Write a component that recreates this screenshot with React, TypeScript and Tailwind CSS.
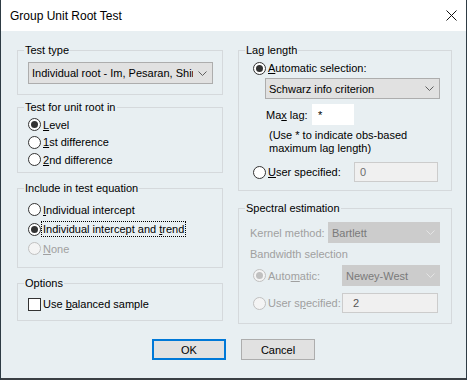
import React from "react";

const Chevron: React.FC<{ disabled?: boolean }> = ({ disabled }) => (
	<svg width="9" height="5" viewBox="0 0 9 5" className="shrink-0">
		<polyline points="0.5,0.5 4.5,4.5 8.5,0.5" fill="none" stroke={disabled ? "#e4e4e4" : "#606060"} strokeWidth="1" />
	</svg>
);

const Radio: React.FC<{ checked?: boolean; disabled?: boolean }> = ({ checked, disabled }) => (
	<span
		className={`w-[13px] h-[13px] shrink-0 rounded-full border flex items-center justify-center ${
			disabled ? "border-[#c0c0c0] bg-[#f4f4f4]" : "border-[#333333] bg-white"
		}`}
	>
		{checked && <span className={`w-[7px] h-[7px] rounded-full ${disabled ? "bg-[#c0c0c0]" : "bg-[#333333]"}`} />}
	</span>
);

const Group: React.FC<{ title: string; className?: string; children?: React.ReactNode }> = ({ title, className, children }) => (
	<fieldset className={`border border-[#d5d9dc] ${className ?? ""}`}>
		<legend className="ml-[6px] px-[1px] leading-[16px] text-black">{title}</legend>
		{children}
	</fieldset>
);

const App: React.FC = () => {
	return (
		<div className="w-[467px] h-[380px] flex flex-col bg-[#e8eff2] border-x border-[#2e3b44] text-[11px] text-black font-['Liberation_Sans',Arial,sans-serif] leading-[16px] whitespace-nowrap">
			{/* Title bar */}
			<div className="h-[31px] shrink-0 bg-white flex items-center justify-between pl-[9px] pr-[9px]">
				<span className="text-[12px]">Group Unit Root Test</span>
				<svg width="11" height="11" viewBox="0 0 11 11">
					<path d="M0.5 0.5 L10.5 10.5 M10.5 0.5 L0.5 10.5" stroke="#111" strokeWidth="1" />
				</svg>
			</div>

			<div className="flex-1 flex flex-col pt-[11px]">
				<div className="flex pl-[16px] gap-[15px]">
					{/* Left column */}
					<div className="w-[206px] flex flex-col">
						<Group title="Test type" className="h-[53px]">
							<div className="mt-[4px] ml-[10px] w-[185px] h-[22px] bg-[#e1e1e1] border border-[#adadad] flex items-center pl-[3px] pr-[5px] overflow-hidden">
								<span className="flex-1 overflow-hidden">Individual root - Im, Pesaran, Shin</span>
								<span className="w-[14px] flex justify-end"><Chevron /></span>
							</div>
						</Group>

						<Group title="Test for unit root in" className="h-[74px] mt-[4px]">
							<div className="mt-[1px] ml-[10px] flex flex-col">
								<label className="h-[17.5px] flex items-center gap-[2px]"><Radio checked /><span><u>L</u>evel</span></label>
								<label className="h-[17.5px] flex items-center gap-[2px]"><Radio /><span><u>1</u>st difference</span></label>
								<label className="h-[17.5px] flex items-center gap-[2px]"><Radio /><span><u>2</u>nd difference</span></label>
							</div>
						</Group>

						<Group title="Include in test equation" className="h-[88px] mt-[7px]">
							<div className="mt-[4px] ml-[10px] flex flex-col">
								<label className="h-[19.5px] flex items-center gap-[2px]"><Radio /><span><u>I</u>ndividual intercept</span></label>
								<label className="h-[19.5px] flex items-center gap-[1px]">
									<Radio checked />
									<span className="outline outline-1 outline-dotted outline-black leading-[14px] px-[1px]">Individual intercept and <u>t</u>rend</span>
								</label>
								<label className="h-[19.5px] flex items-center gap-[2px] text-[#a0a0a0]"><Radio disabled /><span><u>N</u>one</span></label>
							</div>
						</Group>

						<Group title="Options" className="h-[46px] mt-[7px]">
							<label className="mt-[5px] ml-[10px] h-[16px] flex items-center gap-[2px]">
								<span className="w-[13px] h-[13px] border border-[#333333] bg-white" />
								<span>Use <u>b</u>alanced sample</span>
							</label>
						</Group>
					</div>

					{/* Right column */}
					<div className="w-[214px] flex flex-col">
						<Group title="Lag length" className="h-[149px]">
							<label className="mt-[2px] ml-[14px] h-[16px] flex items-center gap-[2px]"><Radio checked /><span><u>A</u>utomatic selection:</span></label>
							<div className="mt-[2px] ml-[26px] w-[175px] h-[21px] bg-[#e1e1e1] border border-[#adadad] flex items-center justify-between pl-[3px] pr-[5px]">
								<span>Schwarz info criterion</span>
								<Chevron />
							</div>
							<div className="mt-[5px] ml-[27px] flex items-center">
								<span className="w-[46px]">Ma<u>x</u> lag:</span>
								<div className="w-[42px] h-[21px] bg-white flex items-center pl-[6px]">*</div>
							</div>
							<div className="mt-[4px] ml-[30px] leading-[13px]">
								<div>(Use * to indicate obs-based</div>
								<div>maximum lag length)</div>
							</div>
							<div className="mt-[7px] ml-[14px] flex items-center">
								<label className="w-[101px] flex items-center gap-[2px]"><Radio /><span><u>U</u>ser specified:</span></label>
								<div className="w-[84px] h-[20px] bg-[#f0f0f0] border border-[#cccccc] flex items-center pl-[5px] text-[#6d6d6d]">0</div>
							</div>
						</Group>

						<Group title="Spectral estimation" className="h-[124px] mt-[9px]">
							<div className="text-[#a0a0a0]">
								<div className="mt-[6px] ml-[11px] flex items-center">
									<span className="w-[78px]">Kernel method:</span>
									<div className="w-[112px] h-[21px] bg-[#cccccc] flex items-center justify-between pl-[4px] pr-[5px] text-[#7a7a7a]">
										<span>Bartlett</span>
										<Chevron disabled />
									</div>
								</div>
								<div className="mt-[3px] ml-[11px] h-[16px] flex items-center">Bandwidth selection</div>
								<div className="mt-[3px] ml-[14px] flex items-center">
									<label className="w-[89px] flex items-center gap-[2px]"><Radio checked disabled /><span>Auto<u>m</u>atic:</span></label>
									<div className="w-[98px] h-[21px] bg-[#cccccc] flex items-center justify-between pl-[4px] pr-[5px] text-[#7a7a7a]">
										<span>Newey-West</span>
										<Chevron disabled />
									</div>
								</div>
								<div className="mt-[7px] ml-[14px] flex items-center">
									<label className="w-[89px] flex items-center gap-[2px]"><Radio disabled /><span>User s<u>p</u>ecified:</span></label>
									<div className="w-[96px] h-[20px] bg-[#f0f0f0] border border-[#cccccc] flex items-center pl-[10px] text-[#555555]">2</div>
								</div>
							</div>
						</Group>
					</div>
				</div>

				{/* Buttons */}
				<div className="mt-[15px] flex justify-center gap-[15px]">
					<button className="w-[74px] h-[21px] bg-[#e1e1e1] border-2 border-[#0078d7] flex items-center justify-center">OK</button>
					<button className="w-[74px] h-[21px] bg-[#e1e1e1] border border-[#adadad] flex items-center justify-center">Cancel</button>
				</div>
			</div>
			<div className="h-[2px] shrink-0 bg-[#3a3f44]" />
		</div>
	);
};

export default App;
